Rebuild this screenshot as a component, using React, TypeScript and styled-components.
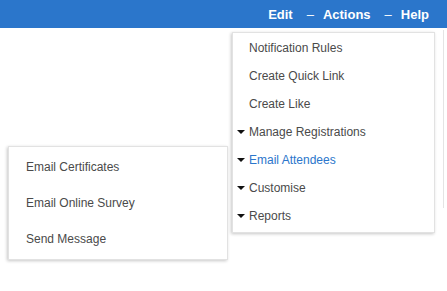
import React from "react";
import styled, { createGlobalStyle } from "styled-components";

const GlobalStyle = createGlobalStyle`
  html, body {
    margin: 0;
    padding: 0;
    background: #fff;
  }
  body {
    font-family: "Liberation Sans", Arial, sans-serif;
  }
`;

const Page = styled.div`
  position: relative;
  width: 447px;
  height: 291px;
  overflow: hidden;
  background: #fff;
`;

const TopBar = styled.div`
  height: 28px;
  box-sizing: border-box;
  padding: 2px 18px 0 0;
  background: #2b76cb;
  display: flex;
  justify-content: flex-end;
  align-items: baseline;
  line-height: 26px;
  font-size: 13px;
`;

const TopLink = styled.a`
  color: #fff;
  font-weight: 700;
  text-decoration: none;
`;

const Dash = styled.span`
  color: #fff;
  margin: 0 9px 0 14px;
`;

const BackEdge = styled.div`
  position: absolute;
  left: 436px;
  top: 30px;
  width: 7px;
  height: 178px;
  border-right: 1px solid #e4e4e4;
`;

const Menu = styled.ul<{ $left: number; $top: number; $width: number }>`
  position: absolute;
  left: ${(p) => p.$left}px;
  top: ${(p) => p.$top}px;
  width: ${(p) => p.$width}px;
  margin: 0;
  padding: 1px 0 2px;
  list-style: none;
  background: #fff;
  border: 1px solid #e2e2e2;
  box-shadow: -1px 1px 3px rgba(0, 0, 0, 0.22);
`;

const Item = styled.li<{ $h: number; $active?: boolean; $pad: number }>`
  position: relative;
  height: ${(p) => p.$h}px;
  line-height: ${(p) => p.$h}px;
  padding-left: ${(p) => p.$pad}px;
  font-size: 12px;
  color: ${(p) => (p.$active ? "#2b76cb" : "#4a4a4a")};
  white-space: nowrap;
`;

const Caret = styled.span`
  position: absolute;
  left: 4px;
  top: 50%;
  margin-top: -2px;
  width: 0;
  height: 0;
  border-left: 4px solid transparent;
  border-right: 4px solid transparent;
  border-top: 4px solid #111;
`;

const SubMenu = styled(Menu)`
  padding: 2px 0;
`;

const mainItems = [
  { label: "Notification Rules" },
  { label: "Create Quick Link" },
  { label: "Create Like" },
  { label: "Manage Registrations", caret: true },
  { label: "Email Attendees", caret: true, active: true },
  { label: "Customise", caret: true },
  { label: "Reports", caret: true },
];

const subItems = ["Email Certificates", "Email Online Survey", "Send Message"];

export default function App() {
  return (
    <Page>
      <GlobalStyle />
      <TopBar>
        <TopLink href="#">Edit</TopLink>
        <Dash>–</Dash>
        <TopLink href="#">Actions</TopLink>
        <Dash>–</Dash>
        <TopLink href="#">Help</TopLink>
      </TopBar>
      <BackEdge />
      <Menu $left={232} $top={32} $width={201}>
        {mainItems.map((it) => (
          <Item key={it.label} $h={28} $pad={16} $active={it.active}>
            {it.caret && <Caret />}
            {it.label}
          </Item>
        ))}
      </Menu>
      <SubMenu $left={8} $top={146} $width={218}>
        {subItems.map((label) => (
          <Item key={label} $h={36} $pad={17}>
            {label}
          </Item>
        ))}
      </SubMenu>
    </Page>
  );
}
